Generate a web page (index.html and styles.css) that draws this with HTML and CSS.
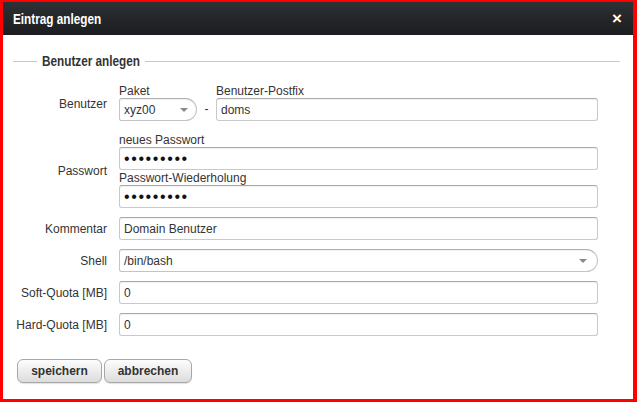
FILE: index.html
```html
<!DOCTYPE html>
<html lang="de">
<head>
<meta charset="utf-8">
<title>Eintrag anlegen</title>
<link rel="stylesheet" href="styles.css">
</head>
<body>
<div class="dialog">
  <div class="titlebar">
    <span class="title">Eintrag anlegen</span>
    <span class="close">×</span>
  </div>
  <div class="content">
    <div class="legend"><span class="line short"></span><span class="legend-box"><span class="legend-text">Benutzer anlegen</span></span><span class="line long"></span></div>
    <div class="form">
      <div class="label">Benutzer</div>
      <div class="field row1">
        <div class="combo">
          <div class="sub">Paket</div>
          <div class="select small"><span>xyz00</span><span class="arrow"></span></div>
        </div>
        <div class="dash">-</div>
        <div class="grow">
          <div class="sub">Benutzer-Postfix</div>
          <input class="input" type="text" value="doms">
        </div>
      </div>

      <div class="label">Passwort</div>
      <div class="field">
        <div class="sub">neues Passwort</div>
        <input class="input pw" type="password" value="123456789">
        <div class="sub gap1">Passwort-Wiederholung</div>
        <input class="input pw" type="password" value="123456789">
      </div>

      <div class="label">Kommentar</div>
      <div class="field"><input class="input" type="text" value="Domain Benutzer"></div>

      <div class="label">Shell</div>
      <div class="field"><div class="select"><span>/bin/bash</span><span class="arrow"></span></div></div>

      <div class="label">Soft-Quota [MB]</div>
      <div class="field"><input class="input" type="text" value="0"></div>

      <div class="label">Hard-Quota [MB]</div>
      <div class="field"><input class="input" type="text" value="0"></div>
    </div>
    <div class="buttons">
      <button class="btn save" type="button">speichern</button>
      <button class="btn cancel" type="button">abbrechen</button>
    </div>
  </div>
</div>
</body>
</html>
```
FILE: styles.css
```css
html, body {
  margin: 0;
  padding: 0;
}
body {
  background: #f00;
  width: 637px;
  height: 402px;
  overflow: hidden;
  font-family: "Liberation Sans", Arial, sans-serif;
  font-size: 12px;
  color: #333;
}
.dialog {
  margin: 2px 4px 3px 3px;
  height: 397px;
  background: #fff;
  display: flex;
  flex-direction: column;
}
.titlebar {
  height: 33px;
  flex: none;
  background: linear-gradient(#2d3034, #1b1d20);
  display: flex;
  align-items: center;
  justify-content: space-between;
  padding: 0 10px 0 10px;
  color: #fff;
}
.title {
  display: inline-block;
  font-weight: bold;
  font-size: 14px;
  transform: scaleX(0.84);
  transform-origin: left center;
}
.close {
  font-weight: bold;
  font-size: 17px;
  line-height: 1;
  margin-right: 1px;
}
.content {
  padding: 18px 13px 0 0;
}
.legend {
  display: flex;
  align-items: center;
  height: 16px;
  padding-left: 10px;
}
.line {
  height: 1px;
  background: #c8c8c8;
}
.line.short { width: 24px; }
.line.long { flex: 1; }
.legend-box {
  width: 98px;
  padding: 0 5px;
  flex: none;
}
.legend-text {
  display: inline-block;
  font-weight: bold;
  font-size: 14px;
  color: #333;
  white-space: nowrap;
  transform: scaleX(0.84);
  transform-origin: left center;
}
.form {
  margin-top: 15px;
  display: grid;
  grid-template-columns: 104px 1fr;
  column-gap: 12px;
  row-gap: 9px;
  padding-right: 22px;
}
.label {
  text-align: right;
  align-self: center;
  white-space: nowrap;
}
.field {
  display: flex;
  flex-direction: column;
}
.field.row1 {
  flex-direction: row;
  align-items: flex-end;
  margin-bottom: 3px;
}
.combo {
  width: 78px;
  flex: none;
}
.dash {
  width: 19px;
  text-align: center;
  line-height: 23px;
  flex: none;
}
.grow {
  flex: 1;
  display: flex;
  flex-direction: column;
}
.sub {
  line-height: 14px;
  height: 14px;
}
.sub.gap1 { margin-top: 1px; }
.input, .select {
  box-sizing: border-box;
  height: 23px;
  width: 100%;
  border: 1px solid #c9c9c9;
  border-top-color: #a9a9a9;
  border-radius: 3px;
  box-shadow: inset 0 1px 1px rgba(0,0,0,0.06);
  background: #fff;
  font-family: "Liberation Sans", Arial, sans-serif;
  font-size: 12px;
  color: #333;
  padding: 0 4px;
  margin: 0;
  outline: none;
}
.input.pw {
  font-size: 16px;
  letter-spacing: 1.6px;
  color: #111;
}
.select {
  display: flex;
  align-items: center;
  justify-content: space-between;
  border-radius: 3px 12px 12px 3px;
  border-color: #c4c4c4;
  border-top-color: #b0b0b0;
  padding: 0 10px 0 4px;
}
.select.small {
  padding-right: 8px;
}
.arrow {
  width: 0;
  height: 0;
  border-left: 4px solid transparent;
  border-right: 4px solid transparent;
  border-top: 4px solid #888;
}
.buttons {
  margin-top: 23px;
  padding-left: 14px;
  display: flex;
  gap: 2px;
}
.btn {
  box-sizing: border-box;
  height: 24px;
  border: 1px solid #a8a8a8;
  border-radius: 6px;
  background: linear-gradient(#fdfdfd, #e6e6e6 70%, #dcdcdc);
  box-shadow: 0 1px 1px rgba(0,0,0,0.12);
  font-family: "Liberation Sans", Arial, sans-serif;
  font-weight: bold;
  font-size: 12px;
  color: #333;
  padding: 0;
  margin: 0;
}
.btn.save { width: 85px; }
.btn.cancel { width: 88px; }
```
